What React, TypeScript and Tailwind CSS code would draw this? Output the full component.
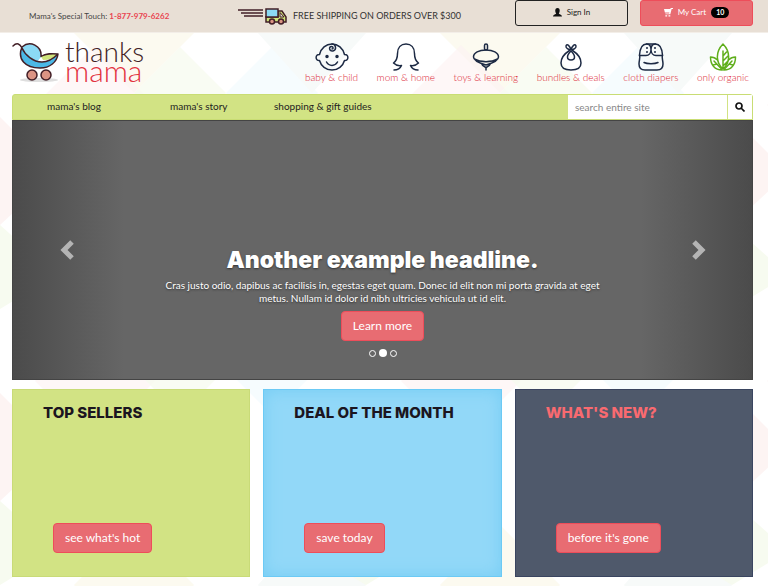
import React from "react";

type IconName = "baby" | "mom" | "toy" | "bundle" | "diaper" | "leaf";

const shopLinks: { label: string; icon: IconName }[] = [
  { label: "baby & child", icon: "baby" },
  { label: "mom & home", icon: "mom" },
  { label: "toys & learning", icon: "toy" },
  { label: "bundles & deals", icon: "bundle" },
  { label: "cloth diapers", icon: "diaper" },
  { label: "only organic", icon: "leaf" },
];

const promos = [
  {
    title: "TOP SELLERS",
    action: "see what's hot",
    box: "bg-[#d2e384] border-[#c9db78] text-[#1b1520]",
  },
  {
    title: "DEAL OF THE MONTH",
    action: "save today",
    box: "bg-[#92d8f8] border-[#6ccaf5] text-[#1b1520] shadow-[inset_0_0_16px_#76cdf4]",
  },
  {
    title: "WHAT'S NEW?",
    action: "before it's gone",
    box: "bg-[#4f596b] border-[#3a4560] text-[#f96a70]",
  },
];

const redButton =
  "rounded border border-[#ee4d5a] bg-[#e86c72] px-[11px] text-[12px] leading-[28px] text-white";

function ShopIcon({ name }: { name: IconName }) {
  const color = name === "leaf" ? "text-[#5fae1b]" : "text-[#1d2a44]";
  return (
    <svg
      viewBox="0 0 34 28"
      className={`h-7 w-[34px] ${color}`}
      fill="none"
      stroke="currentColor"
      strokeWidth="1.5"
      strokeLinecap="round"
      strokeLinejoin="round"
      aria-hidden="true"
    >
      {name === "baby" && (
        <>
          <path d="M4.500 11.500C6 5 11 1 17 1s11 4 12.500 10.500c4.500-.5 4.500 6.500 0 6C28 23 23 27 17 27S6 23 4.500 17.500c-4.500.5-4.500-6.500 0-6Z" />
          <path d="M17 1c4 0 5 6 1 7-4 .5-4.500-4.500-1.500-4.500 2 0 2 2.500.500 2.500M11.500 19c2.500 4.500 8.500 4.500 11 0" />
          <circle cx="12" cy="13.500" r="1" fill="currentColor" />
          <circle cx="22" cy="13.500" r="1" fill="currentColor" />
        </>
      )}
      {name === "mom" && (
        <path d="M5 27c4 0 6-1 7.500-4.500-3 .5-6-.5-8-2.500C8 17.500 8.500 14 8.500 10.500 8.500 4.500 12 1 17 1s8.500 3.500 8.500 9.500c0 3.500.500 7 4 9.500-2 2-5 3-8 2.500C23 26 25 27 29 27" />
      )}
      {name === "toy" && (
        <>
          <rect x="15.500" y="1" width="3" height="6" rx="1.500" />
          <path d="M17 7C10 7 4.500 9.500 4.500 14c0 3 5.500 6 12.500 8 7-2 12.500-5 12.500-8C29.500 9.500 24 7 17 7ZM5.500 16c6 3.500 17 3.500 23 0M13 21.500c1 2 3 1.500 4 3.500 1-2 3-1.500 4-3.500M17 25v2" />
        </>
      )}
      {name === "bundle" && (
        <>
          <path d="M15.500 7.500C10 11 7 16 7 20c0 5.500 5 7 10 7s10-1.500 10-7c0-4-3-9-8.500-12.500" />
          <path d="M17 8c-3 3-3.500 4.500-3.500 6 0 4 7 4 7 0C20.500 12.500 20 11 17 8Z" />
          <path d="M17 7c-2.500-.5-5.500-2-5-4 1-3 4 0 5 4Zm0 0c2.500-.5 5.500-2 5-4-1-3-4 0-5 4Z" />
        </>
      )}
      {name === "diaper" && (
        <>
          <path d="M12.500 1h9C26 1 28 6 28.500 12c-1 3 .5 5 .5 9 0 4-2 6-6 6H11c-4 0-6-2-6-6 0-4 1.500-6 .5-9C6 6 8 1 12.500 1Z" />
          <path d="M5.500 12.500H12c3 0 5-2.500 5-6 0 3.500 2 6 5 6h6.500M17 6.500C17 3 15 1 12.500 1M17 6.500C17 3 19 1 21.500 1M10 19.500c3 1.500 11 1.500 14 0" />
          <path d="M13 5v.1M13 9v.1M21 5v.1M21 9v.1" strokeWidth="2" />
        </>
      )}
      {name === "leaf" && (
        <>
          <path d="M17 26c-7-6-8-17 0-25 8 8 7 19 0 25ZM17 27V8M17 13l3.500-4M17 18l5-5M17 23l5-5" />
          <path d="M16 27C9 27 4.500 22 4.500 14c3 0 5 1 7 3M18 27c7 0 11.500-5 11.500-13-3 0-5 1-7 3M15.500 26 8 18M18.500 26l7.500-8M11 21l-4 1M23 21l4 1" />
        </>
      )}
    </svg>
  );
}

function Pram() {
  return (
    <svg viewBox="0 0 48 40" className="h-10 w-12" fill="none" strokeLinecap="round" strokeLinejoin="round" aria-hidden="true">
      <ellipse cx="27" cy="38" rx="19" ry="2" fill="#dedede" />
      <path d="M10 5c8-7 20-1 19 10l-4 5C18 17 13 12 10 5Z" fill="#8bd9f5" />
      <path d="M10 5c4 9 11 15 20 15 7 0 12-4 16-8-1 8-8 14-18 14C13 26 5 17 10 5Z" fill="#4bb8e6" />
      <path d="M29 14.500c5-3.500 11-3 17-2.500-4 4-9 6-15 6Z" fill="#cfe37b" />
      <path d="M1 4c4-4 7-2 9 2 3 7 11 14 20 14 7 0 12-4 16-8-1 8-8 14-18 14C13 26 5 17 10 5c8-7 20-1 19 9.500 5-3.500 11-3 17-2.500" stroke="#421f27" strokeWidth="1.500" />
      <circle cx="20" cy="33" r="5" fill="#dc9484" stroke="#421f27" strokeWidth="1.500" />
      <circle cx="34" cy="33" r="5" fill="#dc9484" stroke="#421f27" strokeWidth="1.500" />
    </svg>
  );
}

function Truck() {
  return (
    <svg viewBox="0 0 50 18" className="h-[18px] w-[50px]" fill="none" stroke="#421f27" strokeWidth="1.500" aria-hidden="true">
      <path d="M0 3h25M3 6h22M6 9h19" />
      <path d="M28 9v6h20v-5l-4-6h-4v6H28Z" fill="#cfe37b" />
      <path d="M28 2h12v8H28Z" fill="#8bd9f5" />
      <path d="M42 5.500l4 4.500h-4Z" fill="#e8dfd5" strokeWidth="1" />
      <circle cx="34" cy="14.500" r="2.500" fill="#dc9484" />
      <circle cx="43" cy="14.500" r="2.500" fill="#dc9484" />
    </svg>
  );
}

function Backdrop() {
  return (
    <svg className="absolute inset-0 -z-10 h-full w-full opacity-70" aria-hidden="true">
      <defs>
        <pattern id="diamonds" width="366" height="276" patternUnits="userSpaceOnUse" x="0" y="33">
          <path d="M134-60 194 0l-60 60L74 0Z" fill="#fbf8ea" />
          <path d="M134 216l60 60-60 60-60-60Z" fill="#fbf8ea" />
          <path d="M95 12l60 60-60 60-60-60Z" fill="#fdeeee" fillOpacity=".6" />
          <path d="M180 14l46 46-46 46-46-46Z" fill="#f5faea" fillOpacity=".8" />
          <path d="M272 14l46 46-46 46-46-46Z" fill="#f0fafe" fillOpacity=".8" />
          <path d="M312-60 366 0l-54 60-54-60Z" fill="#f4f8f7" />
          <path d="M312 216l54 60-54 60-54-60Z" fill="#f4f8f7" />
          <path d="M0 84l56 56-56 52Z" fill="#fdf0ef" />
          <path d="M0 192l56 50-56 34Z" fill="#f5faea" />
          <path d="M366 84l-56 56 56 52Z" fill="#fdf0ef" />
          <path d="M366 192l-56 50 56 34Z" fill="#f5faea" />
        </pattern>
      </defs>
      <rect width="100%" height="100%" fill="url(#diamonds)" />
    </svg>
  );
}

export default function App() {
  return (
    <div className="relative isolate min-h-screen bg-white pb-[9px] font-['Lato',sans-serif] text-[#222]">
      <Backdrop />
      <div className="border-b border-[#f3eee8] bg-[#e8dfd5]">
        <div className="flex h-8 items-start pl-[29px] pr-[15px]">
          <p className="w-[209px] text-[8px] leading-8 text-[#444]">
            Mama's Special Touch:{" "}
            <a href="tel:18779796262" className="font-bold text-[#e8434f]">1-877-979-6262</a>
          </p>
          <p className="flex flex-1 items-center gap-[5px] text-[9px] leading-8 text-[#333]">
            <Truck />
            FREE SHIPPING ON ORDERS OVER $300
          </p>
          <div className="flex gap-3">
            <button className="flex h-[26px] w-[113px] items-center justify-center gap-[5px] rounded-[3px] border border-[#222] pb-[2px] text-[8px]">
              <svg viewBox="0 0 10 10" className="size-[9px]" fill="#111" aria-hidden="true">
                <path d="M5 0c3 0 3 4 1.500 6 0 1 3.500 1 3.500 3.500H0C0 7 3.500 7 3.500 6 2 4 2 0 5 0Z" />
              </svg>
              Sign In
            </button>
            <button className="flex h-[26px] w-[113px] items-center justify-center gap-[5px] rounded-[3px] border border-[#ee4d5a] bg-[#e86c72] pb-[2px] text-[8px] text-white">
              <svg viewBox="0 0 10 10" className="size-[9px]" fill="#fff" aria-hidden="true">
                <path d="M10 0H7.500L7 1H0l1 4h5l-.3 1H1.500v1H7L8.500 1H10ZM1.500 8h2v1.500h-2ZM5 8h2v1.500H5Z" />
              </svg>
              My Cart
              <span className="rounded-full bg-black px-[5px] text-[7px] font-bold leading-[11px]">10</span>
            </button>
          </div>
        </div>
      </div>

      <div className="pl-3 pr-[15px]">
        <header className="flex h-[61px] items-start justify-between pt-[9px]">
          <a href="#home" className="flex items-start gap-[5px]" aria-label="thanks mama">
            <Pram />
            <span className="flex flex-col text-[28px] font-light leading-[19px] text-[#421f27]">
              <span>thanks</span>
              <span className="text-[30px] text-[#e2323f]">mama</span>
            </span>
          </a>
          <nav className="flex w-[448px] justify-between pr-1 pt-px">
            {shopLinks.map((link) => (
              <a key={link.label} href="#shop" className="flex flex-col items-center whitespace-nowrap text-[10px] font-light leading-[12px] text-[#dc2535]">
                <ShopIcon name={link.icon} />
                {link.label}
              </a>
            ))}
          </nav>
        </header>

        <div className="flex h-[26px] rounded-t-[3px] border border-[#c9dd74] bg-[#d2e384]">
          <nav className="flex flex-1 pl-[34px] text-[10px] leading-[22px] text-[#222]">
            <a href="#blog" className="w-[123px]">mama's blog</a>
            <a href="#story" className="w-[104px]">mama's story</a>
            <a href="#guides">shopping &amp; gift guides</a>
          </nav>
          <form className="flex">
            <input
              type="search"
              aria-label="search entire site"
              placeholder="search entire site"
              className="w-[159px] bg-white px-[7px] text-[10px] outline-none placeholder:text-[#888]"
            />
            <button type="button" aria-label="Search" className="flex w-[25px] items-center justify-center border-l border-[#d2e384] bg-white">
              <svg viewBox="0 0 10 10" className="size-[10px]" fill="none" stroke="#111" strokeWidth="1.700" aria-hidden="true">
                <circle cx="4" cy="4" r="3" />
                <path d="m6 6 3.500 3.500" />
              </svg>
            </button>
          </form>
        </div>

        <section className="relative flex h-[260px] flex-col items-center border border-[#444] bg-[linear-gradient(to_right,#4b4b4b,#666_15%,#666_85%,#4b4b4b)] pt-[125px] text-center text-white">
          <h1 className="font-['Inter',sans-serif] text-[23px] font-black leading-7 [text-shadow:0_1px_2px_#333]">Another example headline.</h1>
          <p className="mt-[5px] w-[440px] text-[10px] leading-[13px] [text-shadow:0_1px_2px_#333]">
            Cras justo odio, dapibus ac facilisis in, egestas eget quam. Donec id elit non mi porta gravida at eget metus. Nullam id dolor id nibh ultricies vehicula ut id elit.
          </p>
          <button className={`mt-[6px] ${redButton}`}>Learn more</button>
          <div className="mt-2 flex items-center gap-[3px]">
            <button aria-label="Slide 1" className="size-[7px] rounded-full border border-white" />
            <button aria-label="Slide 2" className="size-2 rounded-full bg-white" />
            <button aria-label="Slide 3" className="size-[7px] rounded-full border border-white" />
          </div>
          <button aria-label="Previous" className="absolute left-[47px] top-[119px]">
            <svg viewBox="0 0 14 20" className="h-5 w-[14px]" fill="none" stroke="#b4b4b4" strokeWidth="5" aria-hidden="true">
              <path d="M12 2 4 10l8 8" />
            </svg>
          </button>
          <button aria-label="Next" className="absolute right-[46px] top-[119px]">
            <svg viewBox="0 0 14 20" className="h-5 w-[14px]" fill="none" stroke="#b4b4b4" strokeWidth="5" aria-hidden="true">
              <path d="m2 2 8 8-8 8" />
            </svg>
          </button>
        </section>

        <section className="mt-[9px] grid grid-cols-3 gap-[13px]">
          {promos.map((promo) => (
            <article key={promo.title} className={`flex h-[188px] flex-col items-start justify-between border pb-[23px] pl-[30px] pt-[13px] ${promo.box}`}>
              <h2 className="whitespace-nowrap font-['Inter',sans-serif] text-[15px] font-extrabold leading-5">{promo.title}</h2>
              <button className={`ml-[10px] ${redButton}`}>{promo.action}</button>
            </article>
          ))}
        </section>
      </div>
    </div>
  );
}
